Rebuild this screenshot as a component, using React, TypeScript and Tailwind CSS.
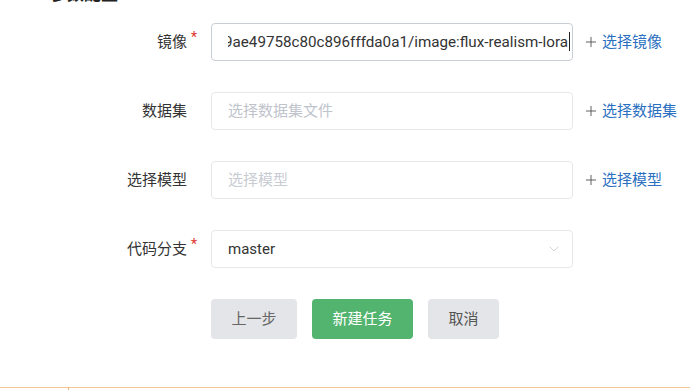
import { Plus, ChevronDown } from "lucide-react";

const font = { fontFamily: '"Roboto", "Noto Sans CJK SC", sans-serif' };

function Label({ text, required }: { text: string; required?: boolean }) {
  return (
    <div className="w-[187px] shrink-0 text-right text-[15px] text-[#333]">
      <span className="relative">
        {text}
        {required && (
          <span className="absolute -right-[10px] -top-[6px] text-[14px] text-[#e0362c]">*</span>
        )}
      </span>
    </div>
  );
}

function AddLink({ text }: { text: string }) {
  return (
    <button className="ml-[10px] flex items-center gap-[3px] text-[15px] text-[#2a6fc0]">
      <Plus className="h-[16px] w-[16px] text-[#555]" strokeWidth={1.4} />
      {text}
    </button>
  );
}

export default function App() {
  return (
    <div className="flex h-[390px] w-full flex-col overflow-hidden bg-white" style={font}>
      {/* Section title, scrolled mostly out of view */}
      <div className="-mt-[18px] h-[24px] pl-[50px] text-[17px] font-bold leading-[24px] text-[#222]">
        参数配置:
      </div>

      <div className="mt-[17px] flex flex-col gap-[31px]">
        {/* 镜像 */}
        <div className="flex h-[38px] items-center">
          <Label text="镜像" required />
          <div className="ml-[24px] flex h-[38px] w-[362px] items-center rounded-[4px] border border-[#c9ced6] pl-[16px] pr-[2px]">
            <div className="flex flex-1 justify-end overflow-hidden whitespace-nowrap text-[15.2px] text-[#333]">
              <span>registry/ab9ae49758c80c896fffda0a1/image:flux-realism-lora</span>
              <span className="ml-[1px] h-[19px] w-[1px] shrink-0 self-center bg-[#222]" />
            </div>
          </div>
          <AddLink text="选择镜像" />
        </div>

        {/* 数据集 */}
        <div className="flex h-[38px] items-center">
          <Label text="数据集" />
          <div className="ml-[24px] flex h-[38px] w-[362px] items-center rounded-[4px] border border-[#e6e8eb] px-[16px] text-[15px] text-[#c0c4cc]">
            选择数据集文件
          </div>
          <AddLink text="选择数据集" />
        </div>

        {/* 选择模型 */}
        <div className="flex h-[38px] items-center">
          <Label text="选择模型" />
          <div className="ml-[24px] flex h-[38px] w-[362px] items-center rounded-[4px] border border-[#e6e8eb] px-[16px] text-[15px] text-[#c8ccd2]">
            选择模型
          </div>
          <AddLink text="选择模型" />
        </div>

        {/* 代码分支 */}
        <div className="flex h-[38px] items-center">
          <Label text="代码分支" required />
          <div className="ml-[24px] flex h-[38px] w-[362px] items-center justify-between rounded-[4px] border border-[#e6e8eb] pl-[16px] pr-[10px] text-[15px] text-[#333]">
            <span>master</span>
            <ChevronDown className="h-[16px] w-[16px] text-[#c0c4cc]" strokeWidth={1.1} />
          </div>
        </div>

        {/* Actions */}
        <div className="flex h-[40px] gap-[15px] pl-[211px]">
          <button className="h-[40px] w-[86px] rounded-[4px] bg-[#e3e5e8] text-[15px] text-[#666]">上一步</button>
          <button className="h-[40px] w-[101px] rounded-[4px] bg-[#52b46e] text-[15px] text-white">新建任务</button>
          <button className="h-[40px] w-[71px] rounded-[4px] bg-[#e3e5e8] text-[15px] text-[#555]">取消</button>
        </div>
      </div>

      {/* Bottom bar edge */}
      <div className="relative mt-auto mb-[2px] h-[1px] w-full bg-[#f6c594]">
        <div className="absolute left-[68px] top-0 h-[3px] w-[1px] bg-[#f0b47a]" />
      </div>
    </div>
  );
}
